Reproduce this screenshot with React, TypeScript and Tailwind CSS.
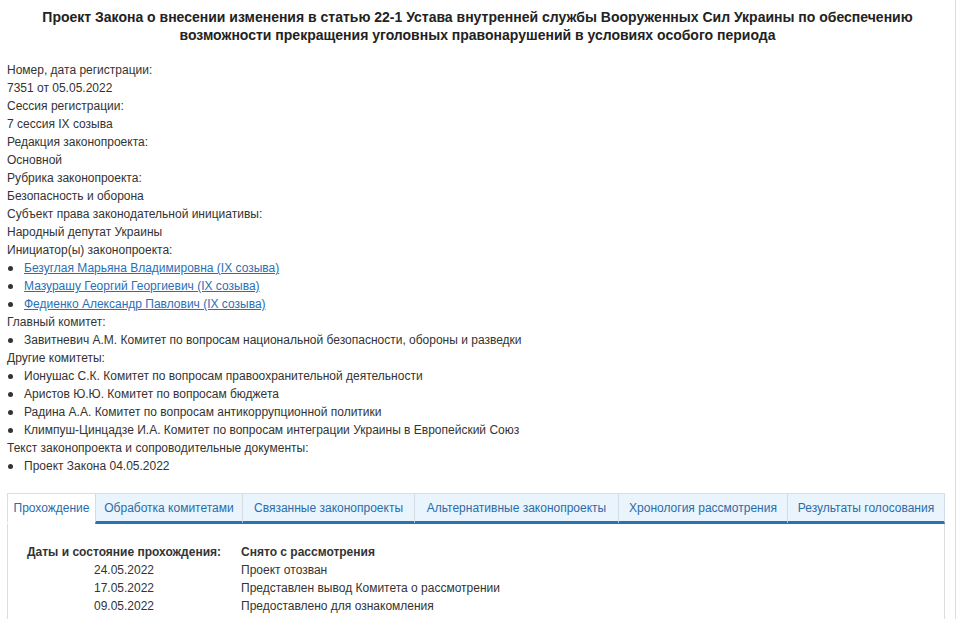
import React from "react";

const info: { label: string; value?: string; list?: { text: string; link?: boolean }[] }[] = [
  { label: "Номер, дата регистрации:", value: "7351 от 05.05.2022" },
  { label: "Сессия регистрации:", value: "7 сессия IX созыва" },
  { label: "Редакция законопроекта:", value: "Основной" },
  { label: "Рубрика законопроекта:", value: "Безопасность и оборона" },
  { label: "Субъект права законодательной инициативы:", value: "Народный депутат Украины" },
  {
    label: "Инициатор(ы) законопроекта:",
    list: [
      { text: "Безуглая Марьяна Владимировна (IX созыва)", link: true },
      { text: "Мазурашу Георгий Георгиевич (IX созыва)", link: true },
      { text: "Федиенко Александр Павлович (IX созыва)", link: true },
    ],
  },
  {
    label: "Главный комитет:",
    list: [{ text: "Завитневич А.М. Комитет по вопросам национальной безопасности, обороны и разведки" }],
  },
  {
    label: "Другие комитеты:",
    list: [
      { text: "Ионушас С.К. Комитет по вопросам правоохранительной деятельности" },
      { text: "Аристов Ю.Ю. Комитет по вопросам бюджета" },
      { text: "Радина А.А. Комитет по вопросам антикоррупционной политики" },
      { text: "Климпуш-Цинцадзе И.А. Комитет по вопросам интеграции Украины в Европейский Союз" },
    ],
  },
  {
    label: "Текст законопроекта и сопроводительные документы:",
    list: [{ text: "Проект Закона 04.05.2022" }],
  },
];

const tabs = [
  { name: "Прохождение", w: "w-[88px]" },
  { name: "Обработка комитетами", w: "w-[147px]" },
  { name: "Связанные законопроекты", w: "w-[172px]" },
  { name: "Альтернативные законопроекты", w: "w-[204px]" },
  { name: "Хронология рассмотрения", w: "w-[169px]" },
  { name: "Результаты голосования", w: "w-[158px]" },
];

const stages = [
  { date: "24.05.2022", text: "Проект отозван" },
  { date: "17.05.2022", text: "Представлен вывод Комитета о рассмотрении" },
  { date: "09.05.2022", text: "Предоставлено для ознакомления" },
  { date: "06.05.2022", text: "Направлено на рассмотрение Комитета" },
];

export default function App() {
  return (
    <div className="w-[956px] h-[619px] overflow-hidden border-r border-[#dcdcdc] bg-white text-[#333] text-[12px] leading-[18px] font-['Liberation_Sans',Arial,sans-serif]">
      {/* заголовок */}
      <h1 className="pt-2 px-10 text-center text-[14px] font-bold leading-[18px] text-[#222]">
        Проект Закона о внесении изменения в статью 22-1 Устава внутренней службы Вооруженных Сил Украины по обеспечению возможности прекращения уголовных правонарушений в условиях особого периода
      </h1>

      {/* карточка законопроекта */}
      <div className="mt-[17px] px-[7px]">
        {info.map((row) => (
          <div key={row.label}>
            <div>{row.label}</div>
            {row.value && <div>{row.value}</div>}
            {row.list && (
              <ul>
                {row.list.map((item) => (
                  <li key={item.text} className="flex items-center">
                    <span className="w-[17px] shrink-0 flex items-center">
                      <span className="w-[5px] h-[5px] ml-[1px] rounded-full bg-[#333]" />
                    </span>
                    {item.link ? (
                      <a href="#" className="text-[#2a6fb5] underline">
                        {item.text}
                      </a>
                    ) : (
                      <span>{item.text}</span>
                    )}
                  </li>
                ))}
              </ul>
            )}
          </div>
        ))}
      </div>

      {/* вкладки */}
      <div className="mt-[18px] mx-[7px] w-[938px]">
        <div className="flex border-t border-[#ddd]">
          {tabs.map((t, i) => (
            <div
              key={t.name}
              className={`${t.w} h-[30px] flex items-center justify-center text-[12px] text-[#2b6ca8] ${
                i === 0
                  ? "bg-white border-l border-[#ddd] border-b-[3px] border-b-white"
                  : "bg-[#e9f4fd] border-l border-[#d4dbe2] border-b-[3px] border-b-[#2a72b5]"
              } ${i === tabs.length - 1 ? "border-r" : ""}`}
            >
              {t.name}
            </div>
          ))}
        </div>
        <div className="border-l border-r border-[#ddd] pt-[19px] pl-[19px] h-[200px]">
          <table className="border-collapse">
            <tbody>
              <tr className="font-bold">
                <td className="w-[194px] text-center">Даты и состояние прохождения:</td>
                <td className="pl-5">Снято с рассмотрения</td>
              </tr>
              {stages.map((s) => (
                <tr key={s.date + s.text}>
                  <td className="text-center">{s.date}</td>
                  <td className="pl-5">{s.text}</td>
                </tr>
              ))}
            </tbody>
          </table>
        </div>
      </div>
    </div>
  );
}
